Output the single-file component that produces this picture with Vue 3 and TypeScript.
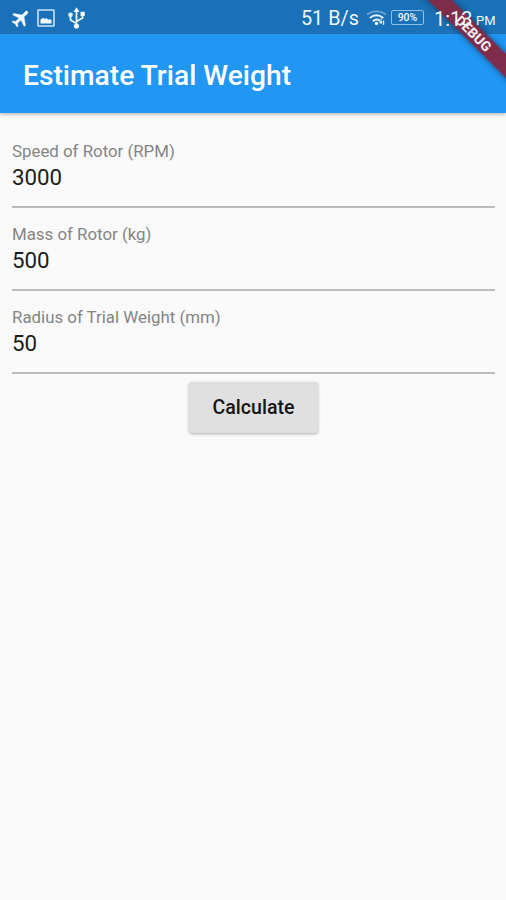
<script setup lang="ts">
import { ref } from 'vue'

interface Field {
  id: string
  label: string
  value: string
}

const fields = ref<Field[]>([
  { id: 'speed', label: 'Speed of Rotor (RPM)', value: '3000' },
  { id: 'mass', label: 'Mass of Rotor (kg)', value: '500' },
  { id: 'radius', label: 'Radius of Trial Weight (mm)', value: '50' },
])
</script>

<template>
  <div class="screen">
    <header class="header">
      <div class="status">
        <svg class="plane" width="22" height="22" viewBox="0 0 24 24">
          <path transform="rotate(45 12 12)" d="M21 16v-2l-7.500-5V3.500C13.500 2.670 12.830 2 12 2s-1.500.670-1.500 1.500V9L3 14v2l7.500-2.500V19L8 20.500V22l4-1 4 1v-1.500L13.500 19v-5.500z" fill="#f2f9ff" stroke="#f2f9ff" stroke-width="0.500" />
        </svg>
        <svg class="photo" width="18" height="18" viewBox="0 0 18 18">
          <rect x="1" y="1" width="16" height="16" rx="0.500" fill="none" stroke="#c9e5f8" stroke-width="1.600" />
          <path d="M3.500 14.500V10.500l2.500-1.700 1.900 1.200 1.600-1 1.800 1.700 1.700-.6 1.500 1.200V14.500z" fill="#f2f9ff" />
        </svg>
        <svg class="usb" width="19" height="22" viewBox="0 0 18 22">
          <g fill="none" stroke="#e8f4fd" stroke-width="1.800">
            <path d="M9 19V3M9 16.500L3 13V8M9 14.500l6-3.500V7" />
          </g>
          <g fill="#f2f9ff">
            <path d="M9 .3l3 4.700H6z" />
            <circle cx="9" cy="19" r="2.600" />
            <circle cx="3" cy="7.800" r="2.300" />
            <rect x="13" y="4.800" width="4.200" height="4.200" />
          </g>
        </svg>
        <span class="rate">51 B/s</span>
        <svg class="wifi" width="21" height="16" viewBox="0 0 21 16" fill="none">
          <path d="M1 4.500Q10.500-2 20 4.500" stroke="#70abd7" stroke-width="1.600" />
          <path d="M3.700 8Q10.500 2.700 17.300 8" stroke="#e4f3fd" stroke-width="1.900" />
          <path d="M6.800 11.300Q10.500 8 13.600 10.700" stroke="#e4f3fd" stroke-width="1.800" />
          <circle cx="10.500" cy="13.500" r="1.700" fill="#f2f9ff" />
          <path d="M15 8.500v4.500M13.300 11.500l1.700 1.800 1.400-1.800M17.600 15v-4.500" stroke="#d5eafa" stroke-width="1.200" />
        </svg>
        <span class="battery">90%</span>
        <span class="time">1:13</span>
        <span class="meridiem">PM</span>
      </div>
      <div class="toolbar">
        <h1 class="title">Estimate Trial Weight</h1>
      </div>
      <svg class="banner" width="90" height="90" viewBox="0 0 90 90">
        <g transform="translate(57.500 33.500) rotate(45)">
          <rect class="ribbon" x="-70" y="-8.500" width="140" height="17" />
          <text class="debug" x="0" y="5" text-anchor="middle">DEBUG</text>
        </g>
      </svg>
    </header>
    <main class="form">
      <div v-for="field in fields" :key="field.id" class="field">
        <label class="label" :for="field.id">{{ field.label }}</label>
        <input :id="field.id" v-model="field.value" class="input" inputmode="numeric" />
      </div>
      <button class="calculate" type="button">Calculate</button>
    </main>
  </div>
</template>

<style>
body {
  background: #fafafa;
}
</style>

<style scoped>
.screen {
  height: 900px;
  overflow: hidden;
  background: #fafafa;
  font-family: Roboto, sans-serif;
}

.header {
  position: relative;
  height: 113px;
  background: #2196f3;
  box-shadow: 0 1px 4px rgba(0, 0, 0, 0.32);
}

.status {
  display: flex;
  align-items: center;
  box-sizing: border-box;
  height: 34px;
  padding: 1px 10px 0 10px;
  background: #1a71b7;
  color: #eef7fe;
  line-height: 1;
}

.status svg {
  flex: none;
}

.photo {
  margin-left: 5px;
}

.usb {
  margin-left: 12px;
}

.rate {
  width: 57px;
  margin: 2px 0 0 auto;
  font-size: 19.800px;
  white-space: nowrap;
}

.wifi {
  margin-left: 8px;
}

.battery {
  box-sizing: border-box;
  width: 33px;
  height: 15px;
  margin-left: 4px;
  border: 1px solid #8fc1e6;
  border-radius: 2px;
  font-size: 10.500px;
  font-weight: 500;
  line-height: 13px;
  text-align: center;
}

/* The clock stays legible above the corner ribbon. */
.time,
.meridiem {
  position: relative;
  z-index: 1;
}

.time {
  width: 38px;
  margin: 2px 0 0 10px;
  font-size: 20px;
}

.meridiem {
  width: 20px;
  margin: 6px 0 0 4px;
  font-size: 13px;
}

.toolbar {
  display: flex;
  align-items: center;
  height: 79px;
  padding: 0 23px;
}

.title {
  margin: 4px 0 0;
  color: #fff;
  font-size: 28.200px;
  font-weight: 500;
  line-height: 34px;
}

.banner {
  position: absolute;
  top: 0;
  right: 0;
}

.ribbon {
  fill: #7d2c4a;
  filter: drop-shadow(0 0 3px rgba(0, 0, 0, 0.45));
}

.debug {
  fill: #f6e9ee;
  font-size: 13.800px;
  font-weight: 800;
}

.form {
  display: flex;
  flex-direction: column;
  padding: 17px 11px 0 12px;
}

.field {
  display: flex;
  flex-direction: column;
  box-sizing: border-box;
  height: 83px;
  padding-top: 11px;
}

.label {
  color: #858585;
  font-size: 16.850px;
  line-height: 20px;
}

.input {
  box-sizing: border-box;
  width: 100%;
  height: 47px;
  margin: 0;
  padding: 0 0 14px;
  border: 0;
  border-bottom: 2px solid #bcbcbc;
  outline: 0;
  background: transparent;
  color: #1c1c1c;
  font: 400 22.300px/31px Roboto, sans-serif;
}

.calculate {
  align-self: center;
  width: 129px;
  height: 51px;
  margin-top: 3px;
  padding: 0;
  border: 0;
  border-radius: 3px;
  background: #e0e0e0;
  box-shadow: 0 1px 3px rgba(0, 0, 0, 0.3);
  color: #161616;
  font: 500 19.600px/51px Roboto, sans-serif;
}
</style>
